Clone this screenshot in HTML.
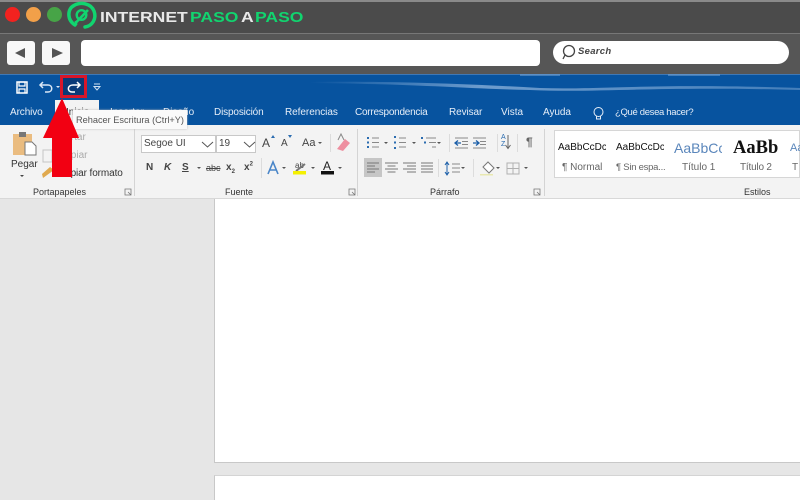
<!DOCTYPE html>
<html><head><meta charset="utf-8">
<style>
*{box-sizing:border-box}
html,body{margin:0;padding:0}
body{width:800px;height:500px;overflow:hidden;position:relative;background:#e6e6e6;font-family:"Liberation Sans",sans-serif}
#w{position:absolute;left:0;top:0;width:800px;height:500px;overflow:hidden;filter:blur(.35px)}
.a{position:absolute}
.t{position:absolute;white-space:nowrap;font-size:10px;color:#444;line-height:12px}
.n{position:absolute;white-space:nowrap;font-size:10px;color:#e6eef8;line-height:12px;top:107px}
.g{position:absolute;white-space:nowrap;font-size:9px;color:#333;line-height:11px;top:187px}
.l{position:absolute;white-space:nowrap;font-size:15px;line-height:14px;top:11px;font-weight:bold;transform-origin:0 50%;transform:scaleX(1.17)}
svg{position:absolute;left:0;top:0}
</style></head><body><div id="w">
<div class="a" style="left:0;top:0;width:800px;height:33px;background:#4b4b4b;border-top:2px solid #8a8a8a"></div>
<div class="a" style="left:0;top:33px;width:800px;height:41px;background:#565656;border-top:1px solid #777"></div>
<div class="a" style="left:5px;top:7px;width:15px;height:15px;border-radius:50%;background:#f2221f"></div>
<div class="a" style="left:26px;top:7px;width:15px;height:15px;border-radius:50%;background:#f2a049"></div>
<div class="a" style="left:47px;top:7px;width:15px;height:15px;border-radius:50%;background:#47a447"></div>
<div class="l" style="left:100px;color:#e8e8e8">INTERNET</div>
<div class="l" style="left:190px;color:#11d46f">PASO</div>
<div class="l" style="left:241px;color:#e8e8e8">A</div>
<div class="l" style="left:255px;color:#11d46f">PASO</div>
<div class="a" style="left:7px;top:41px;width:28px;height:24px;background:#f8f8f8;border-radius:3px"></div>
<div class="a" style="left:42px;top:41px;width:28px;height:24px;background:#f8f8f8;border-radius:3px"></div>
<div class="a" style="left:81px;top:40px;width:459px;height:26px;background:#fff;border-radius:4px"></div>
<div class="a" style="left:553px;top:41px;width:236px;height:23px;background:#fff;border-radius:12px"></div>
<div class="t" style="left:578px;top:46px;font-size:9.5px;font-style:italic;font-weight:bold;color:#444;letter-spacing:.3px">Search</div>

<div class="a" style="left:0;top:74px;width:800px;height:51px;background:#07539f"></div>
<div class="a" style="left:0;top:125px;width:800px;height:74px;background:#f3f3f3;border-bottom:1px solid #d8d8d8"></div>
<div class="a" style="left:214px;top:199px;width:586px;height:264px;background:#fff;border-left:1px solid #c8c8c8;border-bottom:1px solid #c8c8c8"></div>
<div class="a" style="left:214px;top:475px;width:586px;height:25px;background:#fff;border-left:1px solid #c8c8c8;border-top:1px solid #d4d4d4"></div>
<div class="a" style="left:55px;top:100px;width:44px;height:25px;background:#f3f3f3"></div>

<div class="n" style="left:10px;letter-spacing:-.1px">Archivo</div>
<div class="n" style="left:66px;color:#333">Inicio</div>
<div class="n" style="left:110px">Insertar</div>
<div class="n" style="left:163px">Diseño</div>
<div class="n" style="left:214px;letter-spacing:-.15px">Disposición</div>
<div class="n" style="left:285px;letter-spacing:-.05px">Referencias</div>
<div class="n" style="left:355px;letter-spacing:-.25px">Correspondencia</div>
<div class="n" style="left:449px;letter-spacing:-.1px">Revisar</div>
<div class="n" style="left:501px">Vista</div>
<div class="n" style="left:543px;letter-spacing:-.05px">Ayuda</div>
<div class="n" style="left:615px;font-size:9.5px;letter-spacing:-.33px">¿Qué desea hacer?</div>

<div class="a" style="left:554px;top:130px;width:246px;height:48px;background:#fff;border:1px solid #d6d6d6"></div>
<div class="a" style="left:141px;top:135px;width:75px;height:18px;background:#fff;border:1px solid #c8c8c8"></div>
<div class="a" style="left:216px;top:135px;width:40px;height:18px;background:#fff;border:1px solid #c8c8c8"></div>
<div class="a" style="left:364px;top:158px;width:18px;height:19px;background:#c6c6c6"></div>

<div class="t" style="left:11px;top:159px;color:#333">Pegar</div>
<div class="t" style="left:58px;top:168px;color:#333;letter-spacing:-.1px">Copiar formato</div>
<div class="t" style="left:58px;top:132px;color:#aaa">Cortar</div>
<div class="t" style="left:58px;top:150px;color:#aaa">Copiar</div>
<div class="t" style="left:144px;top:138px">Segoe UI</div>
<div class="t" style="left:219px;top:138px">19</div>
<div class="t" style="left:302px;top:137px;font-size:11px">Aa</div>
<div class="t" style="left:146px;top:162px;font-weight:bold">N</div>
<div class="t" style="left:164px;top:162px;font-weight:bold;font-style:italic">K</div>
<div class="t" style="left:182px;top:162px;font-weight:bold;text-decoration:underline">S</div>
<div class="t" style="left:206px;top:162px;text-decoration:line-through;font-size:9px">abc</div>
<div class="t" style="left:226px;top:162px;font-weight:bold">x<sub style="font-size:6px;line-height:0">2</sub></div>
<div class="t" style="left:244px;top:162px;font-weight:bold">x<sup style="font-size:6px;line-height:0">2</sup></div>
<div class="t" style="left:262px;top:137px;font-size:12px">A</div>
<div class="t" style="left:281px;top:138px;font-size:10px">A</div>
<div class="t" style="left:323px;top:160px;font-size:12px;color:#222">A</div>
<div class="t" style="left:295px;top:160px;font-size:8px">ab</div>
<div class="t" style="left:526px;top:136px;font-size:12px;font-weight:bold;color:#666">¶</div>
<div class="t" style="left:501px;top:134px;font-size:7px;line-height:7px;color:#2b6cb0">A<br>Z</div>

<div class="g" style="left:33px">Portapapeles</div>
<div class="g" style="left:225px">Fuente</div>
<div class="g" style="left:430px">Párrafo</div>
<div class="g" style="left:744px">Estilos</div>

<div class="t" style="left:558px;top:142px;width:48px;overflow:hidden;font-size:10px;color:#111">AaBbCcDc</div>
<div class="t" style="left:616px;top:142px;width:48px;overflow:hidden;font-size:10px;color:#111">AaBbCcDc</div>
<div class="t" style="left:674px;top:140px;width:48px;overflow:hidden;font-size:14px;line-height:16px;color:#5a86bb">AaBbCc</div>
<div class="t" style="left:733px;top:138px;font:bold 18.5px/20px 'Liberation Serif',serif;color:#111">AaBb</div>
<div class="t" style="left:790px;top:142px;font-size:11px;color:#5a86bb">Aa</div>
<div class="t" style="left:562px;top:162px;color:#666">¶ Normal</div>
<div class="t" style="left:616px;top:162px;color:#666;font-size:9.5px;letter-spacing:-.25px">¶ Sin espa...</div>
<div class="t" style="left:682px;top:162px;color:#666">Título 1</div>
<div class="t" style="left:740px;top:162px;color:#666;letter-spacing:-.2px">Título 2</div>
<div class="t" style="left:792px;top:162px;color:#666">T</div>

<svg width="800" height="500" viewBox="0 0 800 500">
<defs><linearGradient id="g1" x1="0" x2="1"><stop offset="0" stop-color="#8fb4dc" stop-opacity="0"/><stop offset=".35" stop-color="#8fb4dc" stop-opacity=".75"/><stop offset="1" stop-color="#8fb4dc" stop-opacity=".45"/></linearGradient></defs>
<!-- ribbon wave -->
<path d="M310 82C400 81 470 84 540 88C600 90 650 83 800 88L800 90C650 86 600 93 530 90C470 89 420 84 310 83Z" fill="url(#g1)"/>
<path d="M0 74.500H800" stroke="#3f78b5" stroke-width="1"/>
<path d="M520 75H560M668 75H720" stroke="#7fa8d4" stroke-width="1"/>
<!-- logo -->
<path d="M75 25C67 20 67 9 74 5.500C81 1.500 91 3.500 94 11C97 19 92 26 85 27" fill="none" stroke="#11d46f" stroke-width="3.500" stroke-linecap="round"/>
<circle cx="81.500" cy="15" r="4.800" fill="none" stroke="#11d46f" stroke-width="2.400"/>
<path d="M76 25L76 21M76 22.500L88 10" fill="none" stroke="#11d46f" stroke-width="2.600"/>
<!-- nav arrows -->
<path d="M25 48L15 53L25 58Z" fill="#555"/>
<path d="M52 48L63 53L52 58Z" fill="#555"/>
<!-- search icon -->
<circle cx="569" cy="51" r="5.500" fill="none" stroke="#444" stroke-width="1.300"/>
<path d="M565 55L563 59" stroke="#444" stroke-width="1.300"/>
<!-- QAT -->
<path d="M17 82H27V93H17Z" fill="none" stroke="#fff" stroke-width="1.500"/>
<path d="M19 82H25V86H19ZM19 93V89H25V93" fill="none" stroke="#fff" stroke-width="1.200"/>
<path d="M41 85H48C53 85 53 92 48 92H45M43 82L40 85L43 88" fill="none" stroke="#dbe8f6" stroke-width="1.500"/>
<path d="M56 86H60L58 88Z" fill="#dbe8f6"/>
<rect x="61.500" y="76.500" width="24" height="20" fill="#0a3a78" stroke="#d8162a" stroke-width="3"/>
<path d="M80 85H73C67 85 67 92 72 92H75M77 82L80 85L77 88" fill="none" stroke="#fff" stroke-width="1.500"/>
<path d="M94 84H100M94 86.500H100L97 90Z" fill="none" stroke="#cfe0f2" stroke-width="1"/>
<!-- lightbulb -->
<circle cx="598.500" cy="112" r="4.500" fill="none" stroke="#e6eef8" stroke-width="1"/>
<path d="M596.500 116V119H600.500V116" fill="none" stroke="#e6eef8"/>
<!-- ribbon separators -->
<path d="M134.500 129V196M357.500 129V196M544.500 129V196" stroke="#d4d4d4"/>
<path d="M330.500 134V152M261.500 158V178M449.500 134V152M497.500 134V152M517.500 134V152M438.500 159V177M473.500 159V177" stroke="#dcdcdc"/>
<!-- clipboard -->
<path d="M13 134H32V155H13Z" fill="#eabc80"/>
<path d="M19 132H26V137H19Z" fill="#777"/>
<path d="M25 142H32L36 146V155H25Z" fill="#fff" stroke="#777"/>
<path d="M20 175H24L22 177Z" fill="#444"/>
<path d="M43 150H52V162H43Z" fill="none" stroke="#c4c4c4"/>
<path d="M43 178L54 170L50 167L42 174Z" fill="#e0a94e"/>
<!-- dropdown chevrons -->
<path d="M202 142L207.500 147L213 142M244 142L249.500 147L255 142" fill="none" stroke="#555"/>
<!-- group launchers -->
<path d="M125 189H131V195H125ZM128 192L131 195M349 189H355V195H349ZM534 189H540V195H534ZM352 192L355 195M537 192L540 195" fill="none" stroke="#777" stroke-width=".8"/>
<!-- small carets -->
<path d="M197 167H201L199 169ZM282 167H286L284 169ZM311 167H315L313 169ZM338 167H342L340 169ZM318 142H322L320 144ZM384 142H388L386 144ZM412 142H416L414 144ZM437 142H441L439 144ZM461 167H465L463 169ZM496 167H500L498 169ZM524 167H528L526 169Z" fill="#555"/>
<!-- font size arrows -->
<path d="M271 138L273 135L275 138ZM288 135L290 138L292 135Z" fill="#2b6cb0"/>
<!-- eraser -->
<path d="M337 149L345 139L350 143L343 151Z" fill="#ee8fa0"/>
<path d="M338 140L341 134L344 140" fill="none" stroke="#888"/>
<!-- text effect A -->
<path d="M268 174L273 162L278 174M270 170H276" fill="none" stroke="#4a86c8" stroke-width="1.600"/>
<!-- highlighter and font colour -->
<path d="M296 171L305 164" stroke="#777" stroke-width="2"/>
<rect x="293" y="171" width="13" height="3.500" fill="#f4f000"/>
<rect x="321" y="171" width="13" height="3.500" fill="#111"/>
<!-- lists -->
<path d="M372 138H379M372 142.500H379M372 147H379M399 138H406M399 142.500H406M399 147H406M426 138H436M429 142.500H436M432 147H436" stroke="#888"/>
<path d="M367 138H369M367 142.500H369M367 147H369M394 137H396M394 142.500H396M394 148H396M421 138H423M424 142.500H426" stroke="#2b6cb0" stroke-width="2"/>
<!-- indents -->
<path d="M455 138H468M462 141.500H468M462 144.500H468M455 148H468M473 138H486M480 141.500H486M480 144.500H486M473 148H486" stroke="#888"/>
<path d="M455 143H461M458 140.500L455 143L458 145.500M473 143H479M476 140.500L479 143L476 145.500" fill="none" stroke="#1c5fa8" stroke-width="1.300"/>
<path d="M508 135V148M505.500 145L508 148.500L510.500 145" fill="none" stroke="#666"/>
<!-- alignment -->
<path d="M367 163H379M367 166H375M367 169H379M367 172H375M385 163H398M387.500 166H395.500M385 169H398M387.500 172H395.500M403 163H416M407 166H416M403 169H416M407 172H416M421 163H433M421 166H433M421 169H433M421 172H433" stroke="#777"/>
<!-- line spacing -->
<path d="M447 163V174M445 165L447 162L449 165M445 172L447 175L449 172" fill="none" stroke="#1c5fa8"/>
<path d="M452 164H460M452 168H460M452 172H460" stroke="#888"/>
<!-- shading -->
<path d="M483 167L488 162L494 168L489 173Z" fill="#fff" stroke="#777"/>
<rect x="480" y="174" width="13" height="1.500" fill="#e8e8b0"/>
<!-- borders -->
<path d="M507 163H519V174H507ZM513 163V174M507 168.500H519" fill="none" stroke="#b0b0b0"/>
</svg>
<div class="a" style="left:73px;top:110px;width:114px;height:19px;background:#fafafa;box-shadow:0 0 2px #bbb"></div>
<div class="t" style="left:76px;top:114px;font-size:9.200px;color:#555">Rehacer Escritura (Ctrl+Y)</div>
<svg width="800" height="500" viewBox="0 0 800 500"><path d="M62 98L79 138H72V177H52V138H43Z" fill="#f20012"/></svg>
</div></body></html>
